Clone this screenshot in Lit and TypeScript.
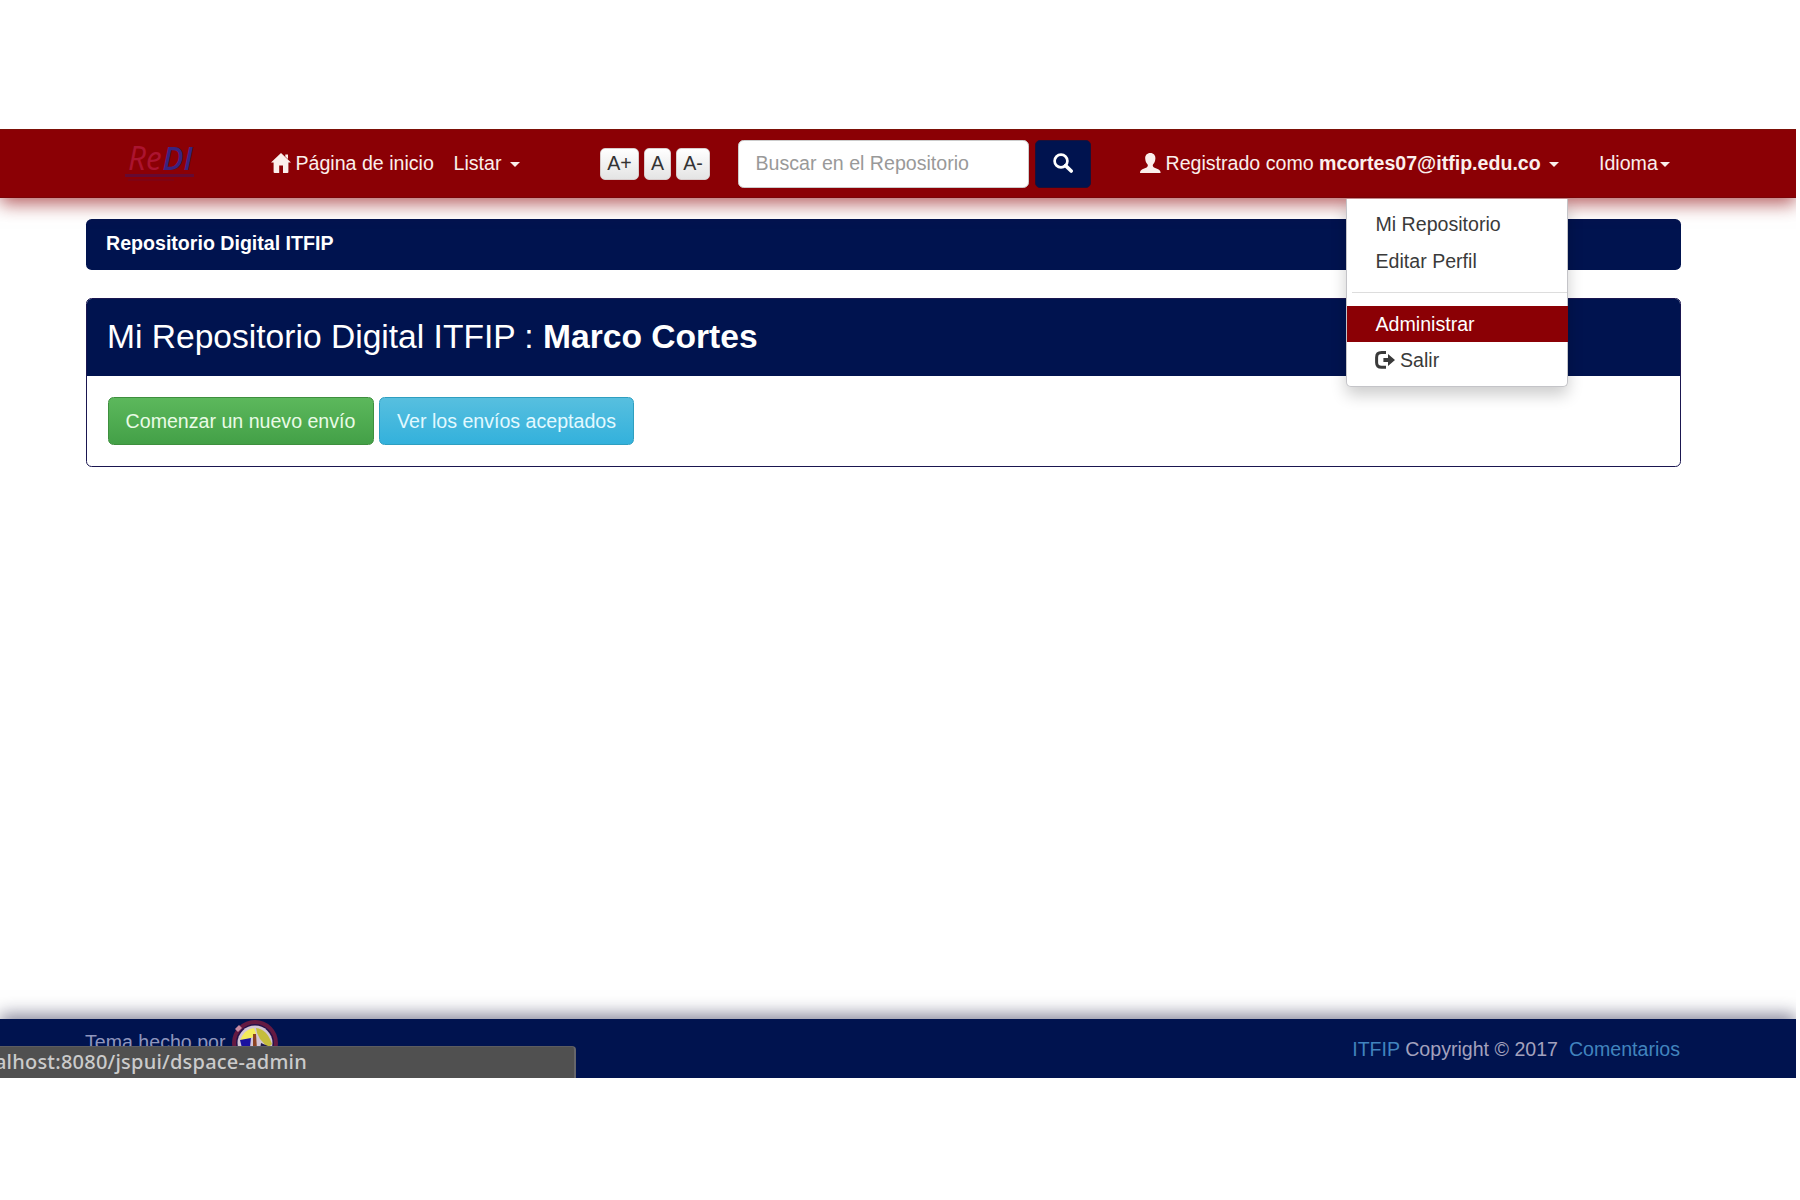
import { LitElement, html, css, svg } from "lit";
import { customElement } from "lit/decorators.js";

const homeIcon = svg`<path d="M10 0 L20 9.6 L17.4 9.6 L17.4 19 Q17.4 20 16.4 20 L12 20 L12 12.6 L8.2 12.6 L8.2 20 L3.6 20 Q2.6 20 2.6 19 L2.6 9.6 L0 9.6 Z M14.3 1.6 H17 V6 L14.3 3.6 Z"/>`;
const searchIcon = svg`<circle cx="8" cy="8" r="6.4" fill="none" stroke="currentColor" stroke-width="2.7"/><path d="M12.6 12.6 L18.2 18" stroke="currentColor" stroke-width="3.6" stroke-linecap="round"/>`;
const userIcon = svg`<path d="M10.3 0 C13.6 0 15.6 2.3 15.4 5.6 C15.3 8.2 14.4 10.2 13 11.6 C12.5 12.8 12.8 13.8 14 14.4 L18.2 16.3 C19.8 17.1 20.6 18 20.6 20 L0 20 C0 18 .8 17.1 2.4 16.3 L6.6 14.4 C7.8 13.8 8.1 12.8 7.6 11.6 C6.2 10.2 5.3 8.2 5.2 5.6 C5 2.3 7 0 10.3 0 Z"/>`;
const exitIcon = svg`<path d="M11 1.6 H6.6 Q1.6 1.6 1.6 6.4 V11.4 Q1.6 16.2 6.6 16.2 H11" fill="none" stroke="currentColor" stroke-width="3"/><path d="M8.4 6.9 H13 V3 L20 9 L13 15 V11.1 H8.4 Z"/>`;

@customElement("app-root")
export class AppRoot extends LitElement {
  static styles = css`
    :host {
      display: block;
      height: 1200px;
      overflow: hidden;
      background: #fff;
      color: #333;
      font: 19.6px/28px "Liberation Sans", Arial, sans-serif;
    }
    .frame { padding-top: 129px; }
    .page {
      width: 1796px;
      height: 949px;
      display: flex;
      flex-direction: column;
    }
    svg { display: block; fill: currentColor; flex: none; }
    .navbar {
      flex: none;
      height: 69px;
      box-sizing: border-box;
      background: #8b0005;
      border-top: 1px solid #7c1008;
      border-bottom: 1px solid #780408;
      box-shadow: 0 6px 17px rgba(139, 0, 5, .62);
      clip-path: inset(0 0 -400px 0);
      color: #fbefec;
      display: grid;
      grid-template-columns: 143px 182.5px 146.5px 137.5px 297.5px 105px 459px 1fr;
      align-items: center;
      padding-left: 128px;
      position: relative;
      z-index: 2;
    }
    .item { display: flex; align-items: center; white-space: nowrap; height: 28px; margin-top: -1px; }
    .item svg { margin-right: 4.5px; margin-top: -1px; }
    .caret {
      border: 5.6px solid transparent;
      border-top-color: currentColor;
      border-bottom: 0;
      margin-left: 8.5px;
      margin-top: 3px;
    }
    .tight { margin-left: 2px; }
    .logo {
      display: flex;
      flex-direction: column;
      width: 66px;
      font: italic 33px/32px "Open Sans", "Noto Sans", sans-serif;
      color: #ab1430;
      margin-top: -5px;
    }
    .logo .letters { transform: scaleX(.95); transform-origin: left; white-space: nowrap; }
    .logo .di { color: #3a237f; font-weight: 600; margin-left: 1px; }
    .logo .rule { height: 3px; margin: 0 0 0 -3px; background: #5b0c3d; opacity: .8; }
    .logo .sub { height: 2px; width: 46px; margin-top: 2px; background: #730522; opacity: .5; }
    .sizes { display: flex; gap: 5px; }
    .size {
      height: 32px;
      box-sizing: border-box;
      border-radius: 5px;
      background: linear-gradient(#fff, #e4e4e4);
      border: 1px solid #d8cccc;
      color: #333;
      line-height: 29px;
      text-align: center;
      width: 39px;
    }
    .size.mid { width: 27px; }
    .size.minus { width: 34px; }
    .search {
      width: 291.5px;
      height: 48px;
      box-sizing: border-box;
      border: 1px solid #ccc;
      border-radius: 5.6px;
      background: #fff;
      color: #999;
      padding: 8px 17px;
    }
    .go {
      width: 55.5px;
      height: 48px;
      border-radius: 5px;
      background: #00134f;
      border: 1px solid #1c1038;
      box-sizing: border-box;
      color: #fff;
      display: grid;
      place-items: center;
    }
    .go svg { margin-top: -2px; }
    .menu {
      position: absolute;
      left: 1346px;
      top: 69px;
      width: 222px;
      height: 187.5px;
      box-sizing: border-box;
      padding: 7px 0;
      border: 1px solid #c4c4c8;
      border-top: 0;
      border-radius: 0 0 5px 5px;
      background: #fff;
      box-shadow: 0 8px 16px rgba(0, 0, 0, .2);
      color: #3a3a3a;
    }
    .entry { height: 36.4px; line-height: 36px; padding-left: 28.5px; display: flex; align-items: center; }
    .entry svg { margin: 0 5.5px 0 -1px; }
    .entry.active { background: #8b0005; color: #fff; margin-right: -1px; }
    .divider { height: 1px; margin: 13px 0 13px 5px; background: #ddd; }
    main { flex: 1; padding: 21px 115px 0 85.5px; }
    .crumb {
      height: 50.5px;
      line-height: 49px;
      border-radius: 5.6px;
      background: #00134f;
      color: #fff;
      font-weight: bold;
      padding-left: 20.5px;
    }
    .panel {
      box-sizing: border-box;
      height: 169.5px;
      margin-top: 28px;
      border: 1.4px solid #1a1650;
      border-radius: 5.6px;
      overflow: hidden;
    }
    .head {
      height: 77px;
      line-height: 75px;
      font-size: 33.6px;
      background: #00134f;
      color: #fff;
      padding-left: 20.5px;
      white-space: nowrap;
    }
    .body { display: flex; gap: 5.5px; padding: 21px 21px; }
    .btn {
      height: 48px;
      line-height: 46px;
      box-sizing: border-box;
      border-radius: 5.6px;
      border: 1px solid #3e8f3e;
      background: linear-gradient(#5cb85c, #43a047);
      color: #e9fbe6;
      width: 266px;
      text-align: center;
      white-space: nowrap;
    }
    .btn.info { width: 255px; background: linear-gradient(#57bfdf, #33b1dc); border-color: #2f9fc0; color: #e2f9ff; }
    footer {
      flex: none;
      height: 59.5px;
      background: #00134f;
      box-shadow: 0 -5px 16px rgba(20, 20, 60, .5);
      clip-path: inset(-40px 0 0 0);
      color: #a3a1bd;
      display: flex;
      justify-content: space-between;
      padding: 0 116px 0 85px;
      position: relative;
    }
    .theme { display: flex; padding-top: 9px; white-space: nowrap; color: #8f96bd; }
    .theme svg { margin: -8px 0 0 6px; }
    .legal { padding-top: 16px; white-space: nowrap; }
    .legal a { color: #4184be; }
    .legal .last { margin-left: 5.5px; }
    .status {
      position: absolute;
      left: 0;
      bottom: 0;
      width: 575.5px;
      height: 32px;
      box-sizing: border-box;
      background: #505050;
      border-top: 1px solid #5c5c60;
      border-right: 2px solid #66666a;
      border-top-right-radius: 4px;
      color: #cbcbcb;
      font: 500 20px/29px "Noto Sans", "Open Sans", sans-serif;
      letter-spacing: .22px;
    }
    .url { width: 307px; height: 31px; display: flex; justify-content: flex-end; overflow: hidden; white-space: nowrap; }
  `;

  render() {
    return html`
      <div class="frame"><div class="page">
        <div class="navbar">
          <div class="logo">
            <div class="letters">Re<span class="di">DI</span></div>
            <div class="rule"></div>
            <div class="sub"></div>
          </div>
          <div class="item"><svg width="20" height="20" viewBox="0 0 20 20">${homeIcon}</svg>Página de inicio</div>
          <div class="item">Listar<span class="caret"></span></div>
          <div class="sizes">
            <div class="size">A+</div><div class="size mid">A</div><div class="size minus">A-</div>
          </div>
          <div class="search">Buscar en el Repositorio</div>
          <div class="go"><svg width="20" height="20" viewBox="0 0 20 20">${searchIcon}</svg></div>
          <div class="item">
            <svg width="21" height="20" viewBox="0 0 21 20">${userIcon}</svg>
            <span>Registrado como <b>mcortes07@itfip.edu.co</b></span><span class="caret"></span>
          </div>
          <div class="item">Idioma<span class="caret tight"></span></div>
          <div class="menu">
            <div class="entry">Mi Repositorio</div>
            <div class="entry">Editar Perfil</div>
            <div class="divider"></div>
            <div class="entry active">Administrar</div>
            <div class="entry"><svg width="20" height="18" viewBox="0 0 20 18">${exitIcon}</svg>Salir</div>
          </div>
        </div>
        <main>
          <div class="crumb">Repositorio Digital ITFIP</div>
          <div class="panel">
            <div class="head">Mi Repositorio Digital ITFIP : <b>Marco Cortes</b></div>
            <div class="body">
              <div class="btn">Comenzar un nuevo envío</div>
              <div class="btn info">Ver los envíos aceptados</div>
            </div>
          </div>
        </main>
        <footer>
          <div class="theme">Tema hecho por
            <svg width="46" height="46" viewBox="0 0 46 46">
              <circle cx="23" cy="23" r="21" fill="#25104a" stroke="#651a42" stroke-width="4"/>
              <circle cx="23" cy="23" r="17.5" fill="#d3c6d6"/>
              <path d="M8 21 Q12 9 22 8 L24 13 L21 17 L10 22 Z" fill="#f4ec5a"/>
              <path d="M24 8 Q35 9 40 24 L36 28 L28 19 L25 13 Z" fill="#c5bd3c"/>
              <path d="M8 20 L19 18 L18 27 L10 28 Z" fill="#1a12a0"/>
              <path d="M21 14 L24 14 L25 30 H21 Z" fill="#8c4323"/>
              <path d="M29 23 L36 26 L35 30 H28 Z" fill="#231d4c"/>
              <path d="M3 9 L7 5 L10 8 L6 12 Z" fill="#c98aa0"/>
            </svg>
          </div>
          <div class="legal"><a>ITFIP</a> Copyright © 2017 <a class="last">Comentarios</a></div>
          <div class="status"><div class="url">calhost:8080/jspui/dspace-admin</div></div>
        </footer>
      </div></div>
    `;
  }
}
